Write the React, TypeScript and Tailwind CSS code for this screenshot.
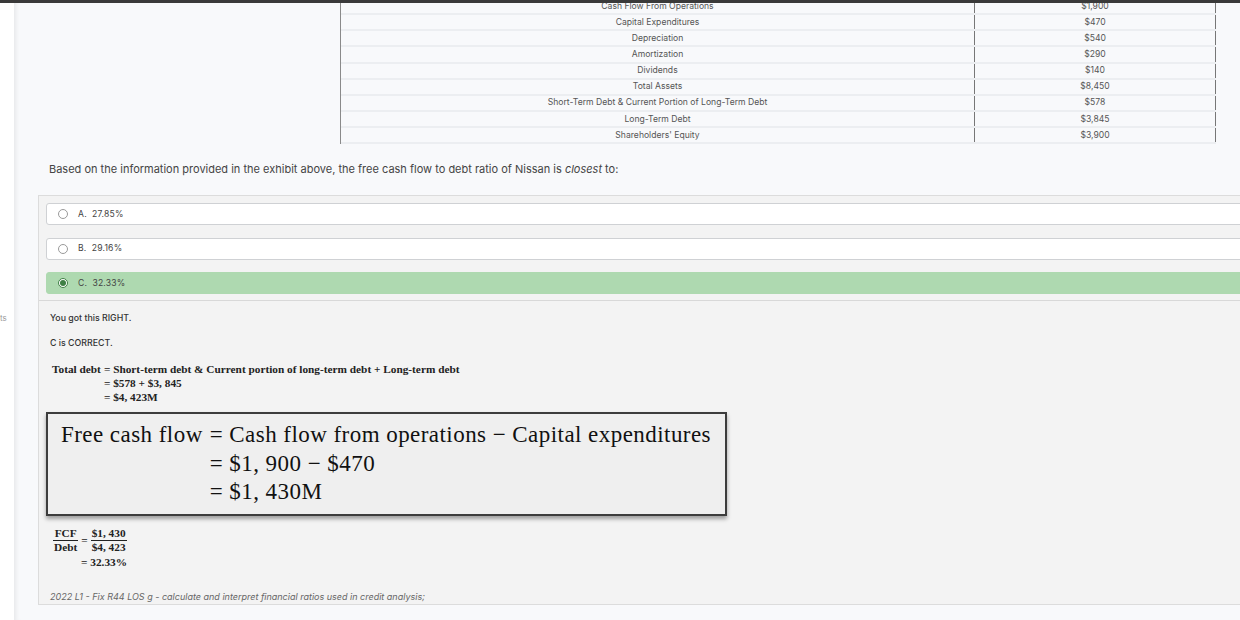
import React from "react";

const rows: [string, string][] = [
  ["Cash Flow From Operations", "$1,900"],
  ["Capital Expenditures", "$470"],
  ["Depreciation", "$540"],
  ["Amortization", "$290"],
  ["Dividends", "$140"],
  ["Total Assets", "$8,450"],
  ["Short-Term Debt & Current Portion of Long-Term Debt", "$578"],
  ["Long-Term Debt", "$3,845"],
  ["Shareholders' Equity", "$3,900"],
];

function Radio({ checked }: { checked?: boolean }) {
  return checked ? (
    <span className="w-[10px] h-[10px] rounded-full border border-[#3f7f45] bg-white flex items-center justify-center shrink-0">
      <span className="w-[6px] h-[6px] rounded-full bg-[#3f7f45]" />
    </span>
  ) : (
    <span className="w-[10px] h-[10px] rounded-full border border-[#9a9a9a] bg-white shrink-0" />
  );
}

function Option({ label, text, correct }: { label: string; text: string; correct?: boolean }) {
  return (
    <div
      className={
        "h-[22px] flex items-center pl-[11px] rounded-[3px] border " +
        (correct ? "bg-[#aed9b0] border-[#aed9b0]" : "bg-white border-[#cfd1d4]")
      }
    >
      <Radio checked={correct} />
      <span className="ml-[10px] text-[8.6px] text-[#444] tracking-[0.2px]">
        {label}&nbsp;&nbsp;{text}
      </span>
    </div>
  );
}

export default function App() {
  const serif = { fontFamily: '"Liberation Serif", "DejaVu Serif", serif' };
  return (
    <div
      className="w-[1240px] h-[620px] overflow-hidden bg-white flex flex-col"
      style={{ fontFamily: 'Inter, "Noto Sans", sans-serif' }}
    >
      <div className="h-[3px] bg-[#3a3a3a] shrink-0 relative z-10" />
      <div className="flex flex-1 min-h-0">
        <div className="w-[14px] shrink-0">
          <span className="block mt-[309px] text-[8px] text-[#9a9a9a] whitespace-nowrap">ts</span>
        </div>
        <div className="flex-1 bg-[#f8f9fb] shadow-[inset_5px_0_4px_-3px_rgba(0,0,0,0.07)] min-w-0">
          {/* Table */}
          <div className="ml-[326px] w-[876px] -mt-[4px] border-l border-[#8a8a8a]">
            {rows.map(([a, b]) => (
              <div key={a} className="flex h-[16.15px] border-b-2 border-[#eceef1] text-[8.6px] text-[#555]">
                <div className="w-[634px] flex items-center justify-center border-r border-[#777]">{a}</div>
                <div className="w-[241px] flex items-center justify-center border-r border-[#777]">{b}</div>
              </div>
            ))}
          </div>

          {/* Question */}
          <p className="ml-[35px] mt-[18px] text-[11px] leading-[14px] text-[#444]">
            Based on the information provided in the exhibit above, the free cash flow to debt ratio of Nissan is{" "}
            <i>closest</i> to:
          </p>

          {/* Options + explanation */}
          <div className="ml-[24px] mt-[19px] w-[1240px] bg-[#f3f3f3] border border-[#dcdcdc]">
            <div className="pl-[7px] pt-[7px] pb-[6px] flex flex-col gap-[12.5px] border-b border-[#d8d8d8]">
              <Option label="A." text="27.85%" />
              <Option label="B." text="29.16%" />
              <Option label="C." text="32.33%" correct />
            </div>
            <div className="pl-[11px] pt-[11px] pb-[1px]">
              <div className="text-[8.8px] leading-[12px] font-medium text-[#333]">You got this RIGHT.</div>
              <div className="mt-[13px] text-[8.8px] leading-[12px] font-medium text-[#333]">C is CORRECT.</div>

              {/* total debt */}
              <div className="mt-[13px] ml-[2px] text-[11.3px] font-bold text-[#222] leading-[14px]" style={serif}>
                <div className="grid grid-cols-[auto_auto] w-max">
                  <span className="text-right pr-[3px]">Total debt</span>
                  <span>= Short-term debt &amp; Current portion of long-term debt + Long-term debt</span>
                  <span />
                  <span>= $578 + $3, 845</span>
                  <span />
                  <span>= $4, 423M</span>
                </div>
              </div>

              {/* FCF box */}
              <div className="mt-[8px] -ml-[4px] w-[681px] h-[104px] border-2 border-[#3d3d3d] bg-[#efefef] shadow-[0_3px_4px_rgba(0,0,0,0.35)] pt-[7px] pl-[13px]">
                <div
                  className="grid grid-cols-[auto_auto] w-max text-[23px] leading-[28.5px] tracking-[0.45px] text-[#111]"
                  style={serif}
                >
                  <span className="pr-[7px]">Free cash flow</span>
                  <span>= Cash flow from operations − Capital expenditures</span>
                  <span />
                  <span>= $1, 900 − $470</span>
                  <span />
                  <span>= $1, 430M</span>
                </div>
              </div>

              {/* fraction */}
              <div className="mt-[11px] ml-[3px] text-[11.3px] font-bold text-[#222]" style={serif}>
                <div className="flex items-center">
                  <div className="flex flex-col items-center leading-[13px]">
                    <span className="px-[1px]">FCF</span>
                    <span className="w-full h-px bg-[#222]" />
                    <span className="px-[1px]">Debt</span>
                  </div>
                  <span className="mx-[3px]">=</span>
                  <div className="flex flex-col items-center leading-[13px]">
                    <span className="px-[1px]">$1, 430</span>
                    <span className="w-full h-px bg-[#222]" />
                    <span className="px-[1px]">$4, 423</span>
                  </div>
                </div>
                <div className="ml-[28px] mt-[1px] leading-[14px]">= 32.33%</div>
              </div>

              <div className="mt-[22px] text-[9px] leading-[12px] italic text-[#666]">
                2022 L1 - Fix R44 LOS g - calculate and interpret financial ratios used in credit analysis;
              </div>
            </div>
          </div>
        </div>
      </div>
    </div>
  );
}
